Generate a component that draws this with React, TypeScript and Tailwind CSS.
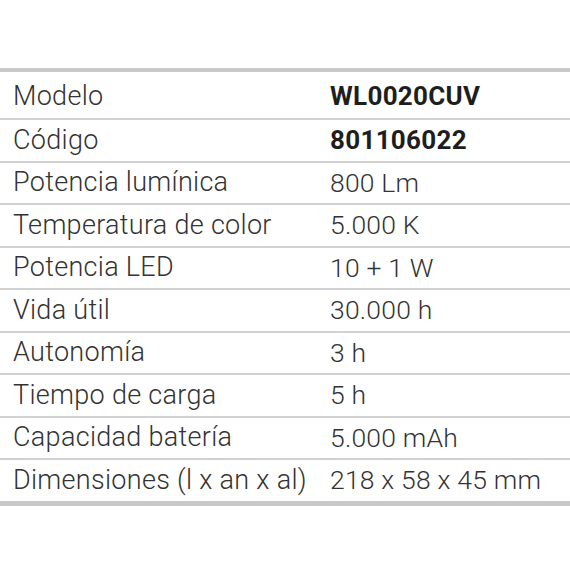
const rows: { label: string; value: string; bold?: boolean }[] = [
  { label: "Modelo", value: "WL0020CUV", bold: true },
  { label: "Código", value: "801106022", bold: true },
  { label: "Potencia lumínica", value: "800 Lm" },
  { label: "Temperatura de color", value: "5.000 K" },
  { label: "Potencia LED", value: "10 + 1 W" },
  { label: "Vida útil", value: "30.000 h" },
  { label: "Autonomía", value: "3 h" },
  { label: "Tiempo de carga", value: "5 h" },
  { label: "Capacidad batería", value: "5.000 mAh" },
  { label: "Dimensiones (l x an x al)", value: "218 x 58 x 45 mm" },
];

export default function App() {
  return (
    <div className="w-[570px] h-[570px] bg-white pt-[68px] font-['Roboto',sans-serif]">
      <div className="border-t-4 border-b-[5px] border-[#c8c8c8]">
        {rows.map((r, i) => (
          <div
            key={r.label}
            className={`grid grid-cols-[330px_1fr] items-center ${
              i === 0 ? "h-[44px] pt-[2px]" : "h-[40.5px]"
            } ${i < rows.length - 1 ? "box-content border-b-2 border-[#d2d2d2]" : ""}`}
          >
            <span className="pl-[13px] text-[27px] font-light tracking-[0.3px] text-[#333] leading-none whitespace-nowrap">
              {r.label}
            </span>
            <span
              className={`leading-none whitespace-nowrap ${
                r.bold
                  ? "text-[26px] font-bold tracking-[0.3px] text-[#1e1e1e]"
                  : "text-[26.5px] font-light tracking-[0.2px] text-[#333]"
              }`}
            >
              {r.value}
            </span>
          </div>
        ))}
      </div>
    </div>
  );
}
